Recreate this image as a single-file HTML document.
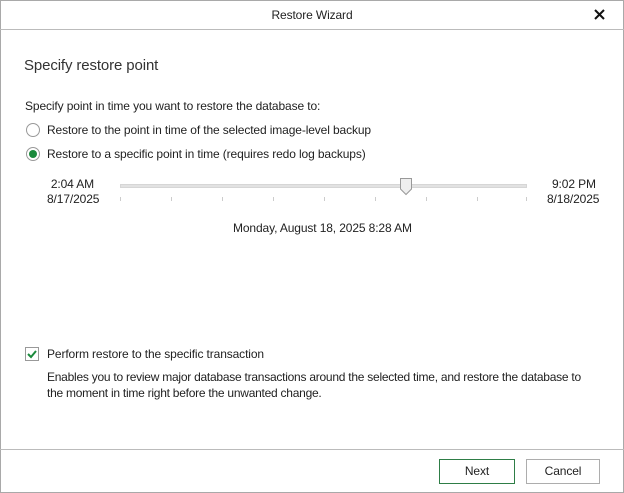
<!DOCTYPE html><html><head><style>
body{margin:0;width:624px;height:493px;background:#fff;font-family:"Liberation Sans",sans-serif;font-size:12px;color:#222;position:relative;overflow:hidden;letter-spacing:-0.12px}
.a{position:absolute;white-space:nowrap}
.win{position:absolute;left:0;top:0;width:622px;height:491px;border:1px solid #a9a9a9}
.rad{position:absolute;width:12px;height:12px;border:1px solid #999;border-radius:50%}
.btn{position:absolute;top:459px;height:23px;border:1px solid #adadad;text-align:center;line-height:23px}
.tick{position:absolute;top:197px;width:1px;height:4px;background:#ccc}
</style></head><body>
<div class="win"></div>
<div class="a" style="left:0;top:29px;width:624px;height:1px;background:#bbb"></div>
<div class="a" style="left:0;top:8px;width:624px;text-align:center">Restore Wizard</div>
<svg class="a" style="left:594px;top:9px" width="11" height="11"><path d="M1 1L10 10M10 1L1 10" stroke="#111" stroke-width="2"/></svg>
<div class="a" style="left:24px;top:57px;font-size:15px;color:#333">Specify restore point</div>
<div class="a" style="left:25px;top:99px">Specify point in time you want to restore the database to:</div>
<div class="rad" style="left:26px;top:123px"></div>
<div class="a" style="left:47px;top:123px">Restore to the point in time of the selected image-level backup</div>
<div class="rad" style="left:26px;top:147px"></div><div class="a" style="left:29px;top:150px;width:8px;height:8px;border-radius:50%;background:#1b8a3c"></div>
<div class="a" style="left:47px;top:147px">Restore to a specific point in time (requires redo log backups)</div>
<div class="a" style="left:49px;top:177px;width:45px;text-align:right">2:04 AM</div>
<div class="a" style="left:47px;top:192px">8/17/2025</div>
<div class="a" style="left:552px;top:177px">9:02 PM</div>
<div class="a" style="left:547px;top:192px">8/18/2025</div>
<div class="a" style="left:120px;top:184px;width:407px;background:#e2e2e2;border:1px solid #d6d6d6;box-sizing:border-box;height:4px"></div>
<svg class="a" style="left:399px;top:178px" width="14" height="18"><path d="M1.5 0.5H12.5V11L7 16.5L1.5 11Z" fill="#eee" stroke="#999"/></svg>
<div class="tick" style="left:120px"></div><div class="tick" style="left:171px"></div><div class="tick" style="left:222px"></div><div class="tick" style="left:273px"></div><div class="tick" style="left:324px"></div><div class="tick" style="left:375px"></div><div class="tick" style="left:426px"></div><div class="tick" style="left:477px"></div><div class="tick" style="left:526px"></div>
<div class="a" style="left:233px;top:221px">Monday, August 18, 2025 8:28 AM</div>
<div class="a" style="left:25px;top:347px;width:12px;height:12px;border:1px solid #999"></div>
<svg class="a" style="left:27px;top:349px" width="10" height="10"><path d="M1 5L4 8L9 2" stroke="#1b8a3c" stroke-width="2" fill="none"/></svg>
<div class="a" style="left:47px;top:347px">Perform restore to the specific transaction</div>
<div class="a" style="left:47px;top:369px;line-height:16px;letter-spacing:-0.25px">Enables you to review major database transactions around the selected time, and restore the database to<br>the moment in time right before the unwanted change.</div>
<div class="a" style="left:0;top:449px;width:624px;height:1px;background:#bbb"></div>
<div class="btn" style="left:439px;width:74px;border-color:#2e7d46">Next</div>
<div class="btn" style="left:526px;width:72px">Cancel</div>
</body></html>
